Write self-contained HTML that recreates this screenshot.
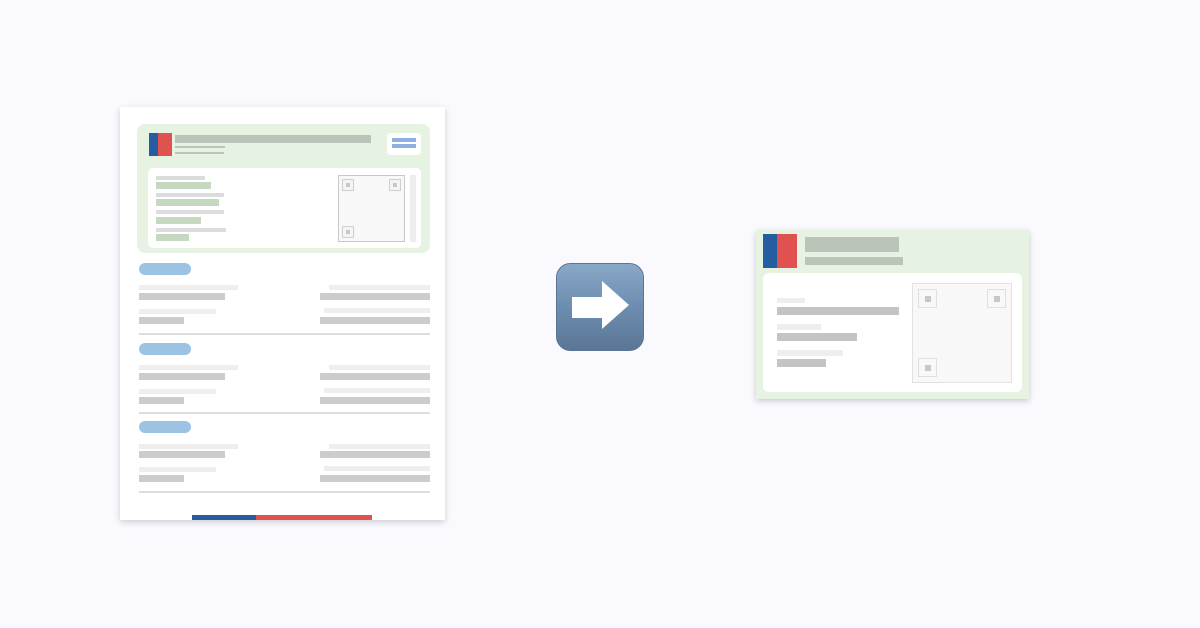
<!DOCTYPE html>
<html><head><meta charset="utf-8"><style>
*{margin:0;padding:0;box-sizing:border-box}
body{width:1200px;height:628px;background:#f9f9fe;position:relative;overflow:hidden;font-family:"Liberation Sans",sans-serif}
div{position:absolute}
.lt{background:#eeeeee}.dk{background:#cccccc}.gn{background:#c5d9c0}.gl{background:#dcdcdc}
.pill{background:#9dc3e4;border-radius:7px;height:12px;width:52px;left:139px}
.hr{background:#dddddd;height:2px;left:139px;width:291px}
.fb{border:1px solid #cfcfcf;background:#f4f4f4}
.fb i{position:absolute;background:#c8c8c8}
</style></head><body>
<!-- document -->
<div style="left:120px;top:107px;width:325px;height:413px;background:#fff;box-shadow:0 2px 6px rgba(0,0,0,.18)"></div>
<div style="left:137px;top:124px;width:293px;height:129px;background:#e6f2e2;border-radius:8px"></div>
<div style="left:149px;top:133px;width:9px;height:23px;background:#245da0"></div>
<div style="left:158px;top:133px;width:14px;height:23px;background:#e05250"></div>
<div style="left:175px;top:135px;width:196px;height:8px;background:#bac4b8"></div>
<div style="left:175px;top:146px;width:50px;height:2px;background:#bac4b8"></div>
<div style="left:175px;top:152px;width:49px;height:2px;background:#bac4b8"></div>
<div style="left:387px;top:133px;width:34px;height:22px;background:#fff;border-radius:4px"></div>
<div style="left:392px;top:138px;width:24px;height:4px;background:#8fb0e0"></div>
<div style="left:392px;top:144px;width:24px;height:4px;background:#8fb0e0"></div>
<div style="left:148px;top:168px;width:273px;height:80px;background:#fff;border-radius:5px"></div>
<div class="gl" style="left:156px;top:176px;width:49px;height:4px"></div>
<div class="gn" style="left:156px;top:182px;width:55px;height:7px"></div>
<div class="gl" style="left:156px;top:193px;width:68px;height:4px"></div>
<div class="gn" style="left:156px;top:199px;width:63px;height:7px"></div>
<div class="gl" style="left:156px;top:210px;width:68px;height:4px"></div>
<div class="gn" style="left:156px;top:217px;width:45px;height:7px"></div>
<div class="gl" style="left:156px;top:228px;width:70px;height:4px"></div>
<div class="gn" style="left:156px;top:234px;width:33px;height:7px"></div>
<div style="left:338px;top:175px;width:67px;height:67px;background:#f8f8f8;border:1px solid #c8c8c8"></div>
<div class="fb" style="left:342px;top:179px;width:12px;height:12px"><i style="left:3px;top:3px;width:4px;height:4px"></i></div>
<div class="fb" style="left:389px;top:179px;width:12px;height:12px"><i style="left:3px;top:3px;width:4px;height:4px"></i></div>
<div class="fb" style="left:342px;top:226px;width:12px;height:12px"><i style="left:3px;top:3px;width:4px;height:4px"></i></div>
<div style="left:410px;top:175px;width:6px;height:67px;background:#eeeeee"></div>

<!-- sections -->
<div class="pill" style="top:263px"></div>
<div class="lt" style="left:139px;top:285px;width:99px;height:5px"></div>
<div class="dk" style="left:139px;top:293px;width:86px;height:7px"></div>
<div class="lt" style="left:329px;top:285px;width:101px;height:5px"></div>
<div class="dk" style="left:320px;top:293px;width:110px;height:7px"></div>
<div class="lt" style="left:139px;top:309px;width:77px;height:5px"></div>
<div class="dk" style="left:139px;top:317px;width:45px;height:7px"></div>
<div class="lt" style="left:324px;top:308px;width:106px;height:5px"></div>
<div class="dk" style="left:320px;top:317px;width:110px;height:7px"></div>
<div class="hr" style="top:333px"></div>

<div class="pill" style="top:343px"></div>
<div class="lt" style="left:139px;top:365px;width:99px;height:5px"></div>
<div class="dk" style="left:139px;top:373px;width:86px;height:7px"></div>
<div class="lt" style="left:329px;top:365px;width:101px;height:5px"></div>
<div class="dk" style="left:320px;top:373px;width:110px;height:7px"></div>
<div class="lt" style="left:139px;top:389px;width:77px;height:5px"></div>
<div class="dk" style="left:139px;top:397px;width:45px;height:7px"></div>
<div class="lt" style="left:324px;top:388px;width:106px;height:5px"></div>
<div class="dk" style="left:320px;top:397px;width:110px;height:7px"></div>
<div class="hr" style="top:412px"></div>

<div class="pill" style="top:421px"></div>
<div class="lt" style="left:139px;top:444px;width:99px;height:5px"></div>
<div class="dk" style="left:139px;top:451px;width:86px;height:7px"></div>
<div class="lt" style="left:329px;top:444px;width:101px;height:5px"></div>
<div class="dk" style="left:320px;top:451px;width:110px;height:7px"></div>
<div class="lt" style="left:139px;top:467px;width:77px;height:5px"></div>
<div class="dk" style="left:139px;top:475px;width:45px;height:7px"></div>
<div class="lt" style="left:324px;top:466px;width:106px;height:5px"></div>
<div class="dk" style="left:320px;top:475px;width:110px;height:7px"></div>
<div class="hr" style="top:491px"></div>

<div style="left:192px;top:515px;width:64px;height:5px;background:#245da0"></div>
<div style="left:256px;top:515px;width:116px;height:5px;background:#e05250"></div>

<!-- arrow -->
<svg style="position:absolute;left:556px;top:263px" width="88" height="88" viewBox="0 0 88 88">
<defs><linearGradient id="g" x1="0" y1="0" x2="0" y2="1"><stop offset="0" stop-color="#8aa9c8"/><stop offset="0.5" stop-color="#6d8db0"/><stop offset="1" stop-color="#5a7696"/></linearGradient></defs>
<rect x="0.5" y="0.5" width="87" height="87" rx="14" fill="url(#g)" stroke="#5a7494"/>
<path d="M16 34 H46 V18 L73 42 L46 66 V55 H16 Z" fill="#fff"/>
</svg>

<!-- card -->
<div style="left:756px;top:230px;width:273px;height:169px;background:#e6f2e2;box-shadow:0 2px 6px rgba(0,0,0,.2)"></div>
<div style="left:763px;top:234px;width:14px;height:34px;background:#245da0"></div>
<div style="left:777px;top:234px;width:20px;height:34px;background:#e05250"></div>
<div style="left:805px;top:237px;width:94px;height:15px;background:#bac4b8"></div>
<div style="left:805px;top:257px;width:98px;height:8px;background:#bac4b8"></div>
<div style="left:763px;top:273px;width:259px;height:119px;background:#fff;border-radius:6px"></div>
<div class="lt" style="left:777px;top:298px;width:28px;height:5px"></div>
<div style="left:777px;top:307px;width:122px;height:8px;background:#c4c4c4"></div>
<div class="lt" style="left:777px;top:324px;width:44px;height:6px"></div>
<div style="left:777px;top:333px;width:80px;height:8px;background:#c4c4c4"></div>
<div class="lt" style="left:777px;top:350px;width:66px;height:6px"></div>
<div style="left:777px;top:359px;width:49px;height:8px;background:#c4c4c4"></div>
<div style="left:912px;top:283px;width:100px;height:100px;background:#f8f8f8;border:1px solid #e2e2e2"></div>
<div class="fb" style="left:918px;top:289px;width:19px;height:19px;border-color:#e0e0e0;background:#f8f8f8"><i style="left:6px;top:6px;width:6px;height:6px"></i></div>
<div class="fb" style="left:987px;top:289px;width:19px;height:19px;border-color:#e0e0e0;background:#f8f8f8"><i style="left:6px;top:6px;width:6px;height:6px"></i></div>
<div class="fb" style="left:918px;top:358px;width:19px;height:19px;border-color:#e0e0e0;background:#f8f8f8"><i style="left:6px;top:6px;width:6px;height:6px"></i></div>
</body></html>
